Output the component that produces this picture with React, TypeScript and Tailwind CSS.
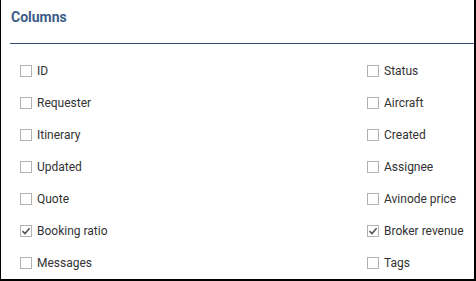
import React from "react";

const left: [string, boolean][] = [
  ["ID", false],
  ["Requester", false],
  ["Itinerary", false],
  ["Updated", false],
  ["Quote", false],
  ["Booking ratio", true],
  ["Messages", false],
];
const right: [string, boolean][] = [
  ["Status", false],
  ["Aircraft", false],
  ["Created", false],
  ["Assignee", false],
  ["Avinode price", false],
  ["Broker revenue", true],
  ["Tags", false],
];

function Box({ checked }: { checked: boolean }) {
  return (
    <span className="w-[12px] h-[12px] border border-[#b3b3b3] bg-white flex items-center justify-center shrink-0">
      {checked && (
        <svg width="10" height="10" viewBox="0 0 10 10">
          <path d="M1.5 5.2 L4 7.6 L8.6 2.2" fill="none" stroke="#555" strokeWidth="1.6" />
        </svg>
      )}
    </span>
  );
}

function Item({ label, checked }: { label: string; checked: boolean }) {
  return (
    <div className="h-[32px] flex items-center gap-[5px]">
      <Box checked={checked} />
      <span className="text-[12px] text-[#333] leading-[16px]">{label}</span>
    </div>
  );
}

export default function App() {
  return (
    <div
      className="w-[476px] h-[281px] bg-white border-l border-r-2 border-b-2 border-black pl-[9px] flex flex-col"
      style={{ fontFamily: "Roboto, 'Liberation Sans', sans-serif" }}
    >
      <div className="h-[44px] border-b border-[#2f5079] pt-[7px]">
        <div className="pl-[1px] text-[14px] leading-[20px] font-bold text-[#3d5d87]">Columns</div>
      </div>
      <div className="pt-[11px] pl-[10px] grid grid-cols-[347px_1fr]">
        <div className="flex flex-col">
          {left.map(([l, c]) => (
            <Item key={l} label={l} checked={c} />
          ))}
        </div>
        <div className="flex flex-col">
          {right.map(([l, c]) => (
            <Item key={l} label={l} checked={c} />
          ))}
        </div>
      </div>
    </div>
  );
}
